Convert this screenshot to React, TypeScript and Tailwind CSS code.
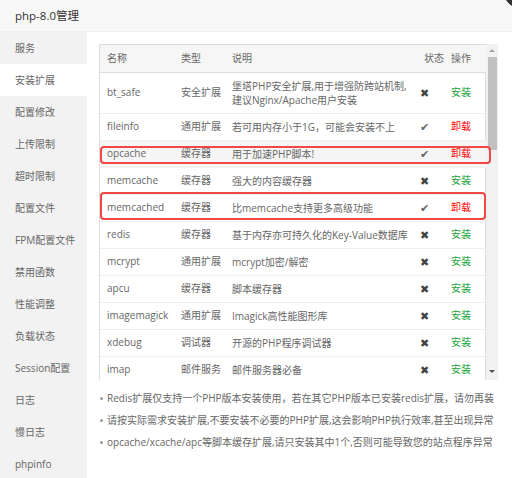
import React from 'react';

type Ext = {
  name: string;
  type: string;
  desc: string[];
  installed: boolean;
};

const exts: Ext[] = [
  { name: 'bt_safe', type: '安全扩展', desc: ['堡塔PHP安全扩展,用于增强防跨站机制,', '建议Nginx/Apache用户安装'], installed: false },
  { name: 'fileinfo', type: '通用扩展', desc: ['若可用内存小于1G，可能会安装不上'], installed: true },
  { name: 'opcache', type: '缓存器', desc: ['用于加速PHP脚本!'], installed: true },
  { name: 'memcache', type: '缓存器', desc: ['强大的内容缓存器'], installed: false },
  { name: 'memcached', type: '缓存器', desc: ['比memcache支持更多高级功能'], installed: true },
  { name: 'redis', type: '缓存器', desc: ['基于内存亦可持久化的Key-Value数据库'], installed: false },
  { name: 'mcrypt', type: '通用扩展', desc: ['mcrypt加密/解密'], installed: false },
  { name: 'apcu', type: '缓存器', desc: ['脚本缓存器'], installed: false },
  { name: 'imagemagick', type: '通用扩展', desc: ['Imagick高性能图形库'], installed: false },
  { name: 'xdebug', type: '调试器', desc: ['开源的PHP程序调试器'], installed: false },
  { name: 'imap', type: '邮件服务', desc: ['邮件服务器必备'], installed: false },
];

const menu = [
  '服务', '安装扩展', '配置修改', '上传限制', '超时限制', '配置文件', 'FPM配置文件',
  '禁用函数', '性能调整', '负载状态', 'Session配置', '日志', '慢日志', 'phpinfo',
];

const tips = [
  'Redis扩展仅支持一个PHP版本安装使用，若在其它PHP版本已安装redis扩展，请勿再装',
  '请按实际需求安装扩展,不要安装不必要的PHP扩展,这会影响PHP执行效率,甚至出现异常',
  'opcache/xcache/apc等脚本缓存扩展,请只安装其中1个,否则可能导致您的站点程序异常',
];

export default function App() {
  return (
    <div className="relative w-[512px] h-[478px] overflow-hidden bg-white text-[#666] font-['Open_Sans','Noto_Sans_CJK_SC',sans-serif]">
      {/* title bar */}
      <div className="h-[32px] bg-[#f8f8f8] border-b border-[#eee] flex items-center pl-[15px] text-[11.5px] text-[#333]">
        php-8.0管理
      </div>
      <div className="absolute left-[504px] top-[-24px] w-[32px] h-[32px] rounded-full bg-[#333]" />

      <div className="flex h-[446px]">
        {/* side menu */}
        <div className="w-[87px] shrink-0 bg-[#f2f2f2] text-[10px] text-[#666]">
          {menu.map((m) => (
            <div
              key={m}
              className={`h-[32px] flex items-center pl-[15px] ${m === '安装扩展' ? 'bg-white' : ''}`}
            >
              {m}
            </div>
          ))}
        </div>

        {/* content */}
        <div className="flex-1 pl-[12px] pt-[12px]">
          <div className="flex h-[336px] w-[399px] overflow-hidden">
            <div className="w-[387px] border-l border-t border-r border-[#ddd] text-[10px]">
              <table className="table-fixed w-full border-collapse">
                <colgroup>
                  <col className="w-[74px]" />
                  <col className="w-[51px]" />
                  <col className="w-[192px]" />
                  <col className="w-[27px]" />
                  <col className="w-[42px]" />
                </colgroup>
                <thead>
                  <tr className="h-[27px] bg-[#f6f6f6] border-b border-[#ddd] text-left">
                    <th className="font-normal pl-[7px]">名称</th>
                    <th className="font-normal pl-[7px]">类型</th>
                    <th className="font-normal pl-[7px]">说明</th>
                    <th className="font-normal pl-[7px]">状态</th>
                    <th className="font-normal pl-[7px]">操作</th>
                  </tr>
                </thead>
                <tbody>
                  {exts.map((e) => (
                    <tr
                      key={e.name}
                      className={`border-b border-[#eee] ${e.desc.length > 1 ? 'h-[41px]' : 'h-[27px]'} ${e.name === 'opcache' ? 'bg-[#f5f5f5]' : ''}`}
                    >
                      <td className="pl-[7px] whitespace-nowrap">{e.name}</td>
                      <td className="pl-[7px] whitespace-nowrap">{e.type}</td>
                      <td className="pl-[7px] leading-[14px] whitespace-nowrap">
                        {e.desc.map((d) => (
                          <div key={d}>{d}</div>
                        ))}
                      </td>
                      <td className="pl-[3px] text-[11px] leading-none">
                        {e.installed ? (
                          <span className="text-[#666]">✔</span>
                        ) : (
                          <span className="text-[#444]">✖</span>
                        )}
                      </td>
                      <td className="pl-[7px]">
                        {e.installed ? (
                          <span className="text-[#ff0000]">卸载</span>
                        ) : (
                          <span className="text-[#20a53a]">安装</span>
                        )}
                      </td>
                    </tr>
                  ))}
                </tbody>
              </table>
            </div>

            {/* scrollbar */}
            <div className="w-[12px] bg-[#f1f1f1] flex flex-col items-center">
              <div className="h-[13px] flex items-center justify-center">
                <div className="w-0 h-0 border-l-[3px] border-r-[3px] border-b-[3px] border-l-transparent border-r-transparent border-b-[#a3a3a3]" />
              </div>
              <div className="w-[9px] h-[93px] bg-[#c1c1c1]" />
              <div className="flex-1" />
              <div className="h-[17px] flex items-center justify-center">
                <div className="w-0 h-0 border-l-[3px] border-r-[3px] border-t-[3px] border-l-transparent border-r-transparent border-t-[#505050]" />
              </div>
            </div>
          </div>

          <ul className="mt-[7px] text-[10px] leading-[22px]">
            {tips.map((t) => (
              <li key={t} className="flex items-center whitespace-nowrap">
                <span className="w-[3px] h-[3px] rounded-full bg-[#999] ml-[1px] mr-[4px] shrink-0" />
                <span>{t}</span>
              </li>
            ))}
          </ul>
        </div>
      </div>

      {/* annotation boxes */}
      <div className="absolute left-[100px] top-[146px] w-[391px] h-[18px] border-[2.5px] border-[#f04848] rounded-[4px]" />
      <div className="absolute left-[100px] top-[192px] w-[386px] h-[28px] border-[2.5px] border-[#f04848] rounded-[4px]" />
    </div>
  );
}
